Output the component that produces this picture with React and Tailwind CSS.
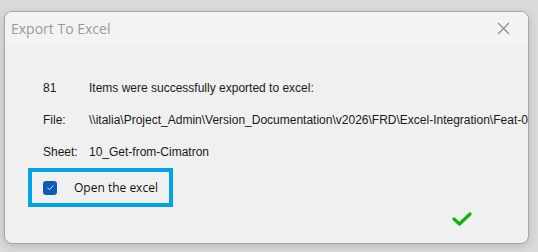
import React from 'react';

function App() {
  return (
    <div className="w-[538px] h-[252px] overflow-hidden bg-[#dadada] pt-[11px] pl-[4px]">
      {/* Dialog window */}
      <div className="w-[525px] h-[233px] rounded-[8px] border border-[#a6a6a6] bg-[#f0f0f0] shadow-[0_2px_8px_rgba(0,0,0,0.15)] overflow-hidden">
        {/* Title bar */}
        <div className="h-[33px] flex items-center justify-between pl-[6px] pr-[18px] bg-[#f3f3f3] [font-family:'Open_Sans','Noto_Sans',sans-serif]">
          <span className="text-[14px] text-[#9a9a9a]">Export To Excel</span>
          <svg width="13" height="13" viewBox="0 0 13 13" className="mt-[-1px]">
            <path d="M1 1 L12 12 M12 1 L1 12" stroke="#8a8a8a" strokeWidth="1.1" fill="none" />
          </svg>
        </div>

        {/* Body */}
        <div className="pl-[38px] pt-[27px] text-[12px] text-[#1a1a1a] whitespace-nowrap [font-family:'Liberation_Sans',Arial,sans-serif]">
          <div className="flex h-[32px] items-center">
            <span className="w-[46px]">81</span>
            <span>Items were successfully exported to excel:</span>
          </div>
          <div className="flex h-[32px] items-center">
            <span className="w-[46px]">File:</span>
            <span>\\italia\Project_Admin\Version_Documentation\v2026\FRD\Excel-Integration\Feat-0</span>
          </div>
          <div className="flex h-[32px] items-center">
            <span className="w-[46px]">Sheet:</span>
            <span>10_Get-from-Cimatron</span>
          </div>
        </div>

        {/* Checkbox highlighted */}
        <div className="ml-[23px] w-[145px] h-[39px] border-[4px] border-[#00a3e6] flex items-center pl-[11px]">
          <span className="w-[14px] h-[14px] rounded-[3px] bg-[#0b5cb8] flex items-center justify-center">
            <svg width="9" height="9" viewBox="0 0 9 9">
              <path d="M1.5 4.8 L3.5 6.6 L7.5 2.4" stroke="#cfe0f5" strokeWidth="1" fill="none" />
            </svg>
          </span>
          <span className="ml-[17px] text-[12px] text-[#111] [font-family:'Open_Sans','Noto_Sans',sans-serif]">Open the excel</span>
        </div>

        {/* OK check */}
        <div className="flex justify-end pr-[56px] mt-[5px]">
          <svg width="20" height="15" viewBox="0 0 20 15">
            <path d="M2 7 L7.5 12 L18 2" stroke="#0bb30b" strokeWidth="3.2" fill="none" strokeLinecap="round" strokeLinejoin="round" />
          </svg>
        </div>
      </div>
    </div>
  );
}

export default App;
